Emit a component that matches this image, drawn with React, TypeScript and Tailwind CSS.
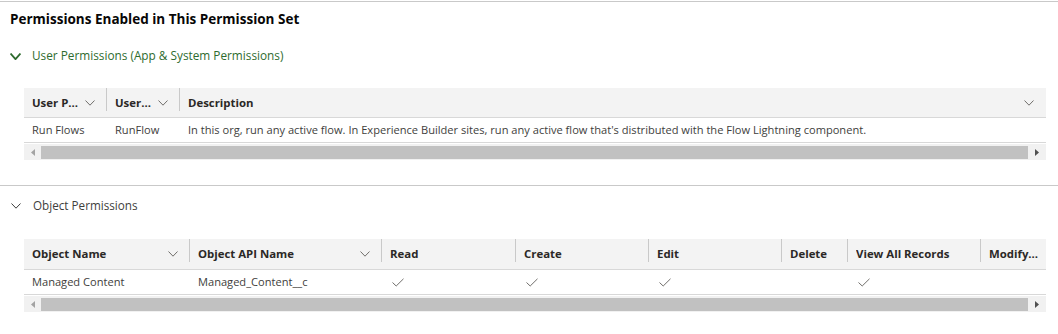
import React from "react";

const F = { fontFamily: '"Open Sans", "Noto Sans", Arial, sans-serif' };

function Chev({ className = "", color = "#706e6b", w = 10, h = 6, sw = 1 }: { className?: string; color?: string; w?: number; h?: number; sw?: number }) {
  return (
    <svg width={w} height={h} viewBox={`0 0 ${w} ${h}`} className={className} fill="none">
      <path d={`M0.5 0.5 L${w / 2} ${h - 0.8} L${w - 0.5} 0.5`} stroke={color} strokeWidth={sw} />
    </svg>
  );
}

function Check() {
  return (
    <svg width="12" height="9" viewBox="0 0 12 9" fill="none">
      <path d="M0.5 4.5 L4.2 8 L11.5 0.8" stroke="#706e6b" strokeWidth="1" />
    </svg>
  );
}

function Scrollbar() {
  return (
    <div className="flex h-[16px] items-center bg-[#f1f1f1]">
      <div className="flex w-[17px] justify-center">
        <svg width="4" height="7" viewBox="0 0 4 7"><path d="M4 0 L0 3.5 L4 7 Z" fill="#a3a3a3" /></svg>
      </div>
      <div className="h-[13px] flex-1 bg-[#c1c1c1]" />
      <div className="flex w-[18px] justify-center">
        <svg width="4" height="7" viewBox="0 0 4 7"><path d="M0 0 L4 3.5 L0 7 Z" fill="#505050" /></svg>
      </div>
    </div>
  );
}

type Col = { label: string; w: number; chev?: boolean; sep?: boolean };

function HeaderCell({ c, last }: { c: Col; last?: boolean }) {
  return (
    <div
      className={`relative flex h-full shrink-0 items-center pl-[8px] pr-[12px] ${last ? "flex-1" : ""}`}
      style={last ? undefined : { width: c.w }}
    >
      <span className="flex-1 truncate font-bold text-[11.4px] text-[#2b2826]">{c.label}</span>
      {c.chev && <Chev />}
      {c.sep && <div className="absolute right-0 top-0 h-[23px] w-px bg-[#c9c9c9]" />}
    </div>
  );
}

export default function App() {
  const t1: Col[] = [
    { label: "User P...", w: 83, chev: true, sep: true },
    { label: "User...", w: 73, chev: true, sep: true },
    { label: "Description", w: 866, chev: true },
  ];
  const t2: Col[] = [
    { label: "Object Name", w: 166, chev: true, sep: true },
    { label: "Object API Name", w: 192, chev: true, sep: true },
    { label: "Read", w: 134, sep: true },
    { label: "Create", w: 133, sep: true },
    { label: "Edit", w: 133, sep: true },
    { label: "Delete", w: 66, sep: true },
    { label: "View All Records", w: 133, sep: true },
    { label: "Modify...", w: 65 },
  ];
  return (
    <div className="h-[334px] w-[1058px] overflow-hidden bg-white text-[11.1px] text-[#3e3e3c]" style={F}>
      <div className="mt-[1px] border-t border-[#c9c9c9]" />
      <div className="flex h-[33px] items-center pl-[10px] pt-[2px] text-[13.5px] font-bold text-[#080707]">
        Permissions Enabled in This Permission Set
      </div>
      <div className="flex h-[42px] items-center pl-[10px] text-[11.8px] text-[#2e6b2e]">
        <Chev color="#2e6b2e" w={11} h={7} sw={1.8} className="mr-[11px]" />
        User Permissions (App &amp; System Permissions)
      </div>

      <div className="ml-[24px] mt-[11px] w-[1022px]">
        <div className="flex h-[30px] border-b border-[#d8d8d8] bg-[#f3f3f3]">
          {t1.map((c, i) => (
            <HeaderCell key={i} c={c} last={i === t1.length - 1} />
          ))}
        </div>
        <div className="flex h-[25px] items-center border-b border-[#d8d8d8]">
          <div className="w-[83px] pl-[8px]">Run Flows</div>
          <div className="w-[73px] pl-[8px]">RunFlow</div>
          <div className="flex-1 whitespace-nowrap pl-[8px]">
            In this org, run any active flow. In Experience Builder sites, run any active flow that&apos;s distributed with the Flow Lightning component.
          </div>
        </div>
        <div className="mt-[1px]">
          <Scrollbar />
        </div>
      </div>

      <div className="mt-[25px] border-t border-[#c9c9c9]" />
      <div className="flex h-[38px] items-center pl-[11px] pt-[2px] text-[11.7px] text-[#3e3e3c]">
        <Chev color="#3e3e3c" w={10} h={6} sw={1} className="mr-[12px]" />
        Object Permissions
      </div>

      <div className="ml-[24px] mt-[15px] w-[1022px]">
        <div className="flex h-[31px] border-b border-[#d8d8d8] bg-[#f3f3f3]">
          {t2.map((c, i) => (
            <HeaderCell key={i} c={c} last={i === t2.length - 1} />
          ))}
        </div>
        <div className="flex h-[25px] items-center border-b border-[#d8d8d8]">
          <div className="w-[166px] pl-[8px]">Managed Content</div>
          <div className="w-[192px] pl-[8px]">Managed_Content__c</div>
          <div className="w-[134px] pl-[10px]"><Check /></div>
          <div className="w-[133px] pl-[10px]"><Check /></div>
          <div className="w-[133px] pl-[10px]"><Check /></div>
          <div className="w-[66px]" />
          <div className="w-[133px] pl-[10px]"><Check /></div>
          <div className="flex-1" />
        </div>
        <div className="mt-[1px]">
          <Scrollbar />
        </div>
      </div>
    </div>
  );
}
